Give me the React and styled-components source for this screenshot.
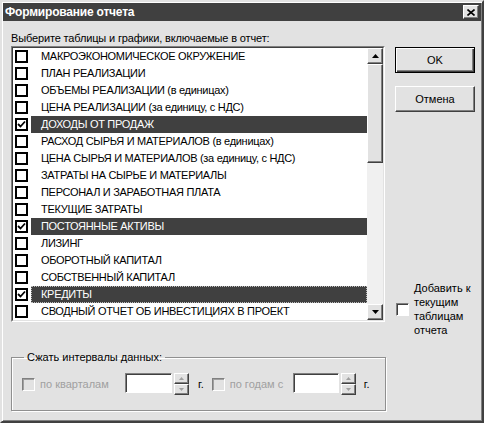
import styled, { createGlobalStyle } from 'styled-components'

const BG = '#e2e2e2'
const DARK = '#404040'

const GlobalStyle = createGlobalStyle`
  html, body { margin: 0; padding: 0; background: ${BG}; }
  body {
    font-family: "Liberation Sans", Arial, sans-serif;
    font-size: 11px;
    color: #000;
  }
  * { box-sizing: border-box; }
`

const raised = `
  background: ${BG};
  border: 1px solid;
  border-color: #fff ${DARK} ${DARK} #fff;
  box-shadow: inset -1px -1px 0 #808080;
`

const Window = styled.div`
  width: 484px;
  height: 423px;
  background: ${BG};
  border: 2px solid;
  border-color: ${BG} ${DARK} ${DARK} ${BG};
  box-shadow: inset 1px 1px 0 #fff, inset -1px -1px 0 #808080;
  padding: 1px;
  display: flex;
  flex-direction: column;
`

const TitleBar = styled.div`
  height: 18px;
  background: ${DARK};
  color: #fff;
  font-weight: bold;
  font-size: 12px;
  letter-spacing: -0.2px;
  padding: 0 2px;
  display: flex;
  align-items: center;
  justify-content: space-between;
`

const CloseButton = styled.div`
  ${raised}
  width: 16px;
  height: 14px;
  display: flex;
  align-items: center;
  justify-content: center;
`

const Body = styled.div`
  flex: 1;
  padding: 10px 6px 0 8px;
  display: flex;
  flex-direction: column;
`

const Main = styled.div`
  display: flex;
  gap: 10px;
`

const LeftCol = styled.div`
  width: 374px;
  display: flex;
  flex-direction: column;
`

const Caption = styled.div`
  line-height: 14px;
  height: 14px;
  margin-bottom: 1px;
  letter-spacing: -0.15px;
`

const ListFrame = styled.div`
  height: 276px;
  border: 1px solid;
  border-color: #808080 #fff #fff #808080;
`

const ListInner = styled.div`
  height: 100%;
  border: 1px solid;
  border-color: ${DARK} ${BG} ${BG} ${DARK};
  background: #fff;
  display: flex;
`

const Rows = styled.div`
  flex: 1;
  display: flex;
  flex-direction: column;
`

const Row = styled.div`
  height: 17px;
  display: flex;
  align-items: center;
`

const ListCheck = styled.div`
  width: 13px;
  height: 13px;
  margin-left: 2px;
  border: 2px solid #000;
  background: #fff;
  display: flex;
  align-items: center;
  justify-content: center;
`

const RowLabel = styled.div`
  flex: 1;
  height: 17px;
  margin-left: 3px;
  padding-left: 10px;
  line-height: 17px;
  letter-spacing: -0.3px;
  white-space: nowrap;
  background: ${p => (p.$selected ? DARK : 'transparent')};
  color: ${p => (p.$selected ? '#fff' : '#000')};
  outline: ${p => (p.$focused ? '1px dotted #bbb' : 'none')};
  outline-offset: -1px;
`

const ScrollBar = styled.div`
  width: 16px;
  display: flex;
  flex-direction: column;
  background: #f0f0f0;
`

const ScrollArrow = styled.div`
  ${raised}
  height: 16px;
  display: flex;
  align-items: center;
  justify-content: center;
`

const Track = styled.div`
  flex: 1;
`

const Thumb = styled.div`
  ${raised}
  height: 99px;
`

const RightCol = styled.div`
  width: 80px;
  display: flex;
  flex-direction: column;
`

const Button = styled.div`
  height: 26px;
  margin-top: ${p => p.$top}px;
  display: flex;
  align-items: center;
  justify-content: center;
  font-size: 11px;
  background: ${BG};
  border: 1px solid;
  border-color: ${p => (p.$default ? '#000' : `#fff ${DARK} ${DARK} #fff`)};
  box-shadow: ${p =>
    p.$default
      ? `inset 1px 1px 0 #fff, inset -1px -1px 0 ${DARK}, inset -2px -2px 0 #808080`
      : 'inset -1px -1px 0 #808080'};
`

const AddRow = styled.div`
  margin-top: 169px;
  display: flex;
  align-items: center;
  gap: 5px;
  padding-left: 1px;
`

const Check = styled.div`
  width: 13px;
  height: 13px;
  flex: none;
  background: ${p => (p.$disabled ? BG : '#fff')};
  border: 1px solid;
  border-color: #808080 #fff #fff #808080;
  box-shadow: inset 1px 1px 0 ${p => (p.$disabled ? '#a0a0a0' : DARK)};
`

const AddText = styled.div`
  line-height: 14px;
`

const Group = styled.fieldset`
  margin: 13px 0 0 0;
  width: 375px;
  padding: 9px 10px 15px 10px;
  border: 1px solid #909090;
  box-shadow: inset 1px 1px 0 #fff, 1px 1px 0 #fff;
`

const Legend = styled.legend`
  margin-left: 2px;
  padding: 0 3px;
  line-height: 14px;
`

const GroupRow = styled.div`
  height: 22px;
  display: flex;
  align-items: center;
`

const DimLabel = styled.span`
  width: ${p => p.$w}px;
  margin-left: 5px;
  color: #a0a0a0;
  white-space: nowrap;
`

const Edit = styled.div`
  width: ${p => p.$w}px;
  height: 20px;
  margin-top: -2px;
  background: #fff;
  border: 1px solid;
  border-color: #808080 #fff #fff #808080;
  box-shadow: inset 1px 1px 0 ${DARK};
`

const Spin = styled.div`
  width: 15px;
  height: 22px;
  margin-left: 2px;
  display: flex;
  flex-direction: column;
`

const SpinPart = styled.div`
  ${raised}
  height: 11px;
  display: flex;
  align-items: center;
  justify-content: center;
`

const Unit = styled.span`
  margin-left: ${p => p.$ml}px;
  margin-right: ${p => p.$mr || 0}px;
`

const Tri = ({ down, color = '#000', w = 7, h = 4 }) => (
  <svg width={w} height={h} viewBox={`0 0 ${w} ${h}`}>
    <polygon
      points={down ? `0,0 ${w},0 ${w / 2},${h}` : `0,${h} ${w},${h} ${w / 2},0`}
      fill={color}
    />
  </svg>
)

const Tick = () => (
  <svg width="9" height="9" viewBox="0 0 9 9">
    <polyline points="1,4 3.5,6.5 8,1.5" fill="none" stroke="#000" strokeWidth="1.8" />
  </svg>
)

const items = [
  ['МАКРОЭКОНОМИЧЕСКОЕ ОКРУЖЕНИЕ'],
  ['ПЛАН РЕАЛИЗАЦИИ'],
  ['ОБЪЕМЫ РЕАЛИЗАЦИИ (в единицах)'],
  ['ЦЕНА РЕАЛИЗАЦИИ (за единицу, с НДС)'],
  ['ДОХОДЫ ОТ ПРОДАЖ', true],
  ['РАСХОД СЫРЬЯ И МАТЕРИАЛОВ (в единицах)'],
  ['ЦЕНА СЫРЬЯ И МАТЕРИАЛОВ (за единицу, с НДС)'],
  ['ЗАТРАТЫ НА СЫРЬЕ И МАТЕРИАЛЫ'],
  ['ПЕРСОНАЛ И ЗАРАБОТНАЯ ПЛАТА'],
  ['ТЕКУЩИЕ ЗАТРАТЫ'],
  ['ПОСТОЯННЫЕ АКТИВЫ', true],
  ['ЛИЗИНГ'],
  ['ОБОРОТНЫЙ КАПИТАЛ'],
  ['СОБСТВЕННЫЙ КАПИТАЛ'],
  ['КРЕДИТЫ', true, true],
  ['СВОДНЫЙ ОТЧЕТ ОБ ИНВЕСТИЦИЯХ В ПРОЕКТ'],
]

function Spinner() {
  return (
    <Spin>
      <SpinPart><Tri color="#a0a0a0" w={5} h={3} /></SpinPart>
      <SpinPart><Tri down color="#a0a0a0" w={5} h={3} /></SpinPart>
    </Spin>
  )
}

export default function App() {
  return (
    <>
      <GlobalStyle />
      <Window>
        <TitleBar>
          <span>Формирование отчета</span>
          <CloseButton>
            <svg width="8" height="7" viewBox="0 0 8 7">
              <path d="M0.5 0.5 L7.5 6.5 M7.5 0.5 L0.5 6.5" stroke="#000" strokeWidth="1.6" />
            </svg>
          </CloseButton>
        </TitleBar>
        <Body>
          <Main>
            <LeftCol>
              <Caption>Выберите таблицы и графики, включаемые в отчет:</Caption>
              <ListFrame>
                <ListInner>
                  <Rows>
                    {items.map(([text, sel, focus]) => (
                      <Row key={text}>
                        <ListCheck>{sel && <Tick />}</ListCheck>
                        <RowLabel $selected={sel} $focused={focus}>{text}</RowLabel>
                      </Row>
                    ))}
                  </Rows>
                  <ScrollBar>
                    <ScrollArrow><Tri /></ScrollArrow>
                    <Track><Thumb /></Track>
                    <ScrollArrow><Tri down /></ScrollArrow>
                  </ScrollBar>
                </ListInner>
              </ListFrame>
            </LeftCol>
            <RightCol>
              <Button $default $top={16}>OK</Button>
              <Button $top={13}>Отмена</Button>
              <AddRow>
                <Check />
                <AddText>Добавить к<br />текущим<br />таблицам<br />отчета</AddText>
              </AddRow>
            </RightCol>
          </Main>
          <Group>
            <Legend>Сжать интервалы данных:</Legend>
            <GroupRow>
              <Check $disabled />
              <DimLabel $w={85}>по кварталам</DimLabel>
              <Edit $w={47} />
              <Spinner />
              <Unit $ml={9} $mr={8}>г.</Unit>
              <Check $disabled />
              <DimLabel $w={63}>по годам с</DimLabel>
              <Edit $w={46} />
              <Spinner />
              <Unit $ml={8}>г.</Unit>
            </GroupRow>
          </Group>
        </Body>
      </Window>
    </>
  )
}
